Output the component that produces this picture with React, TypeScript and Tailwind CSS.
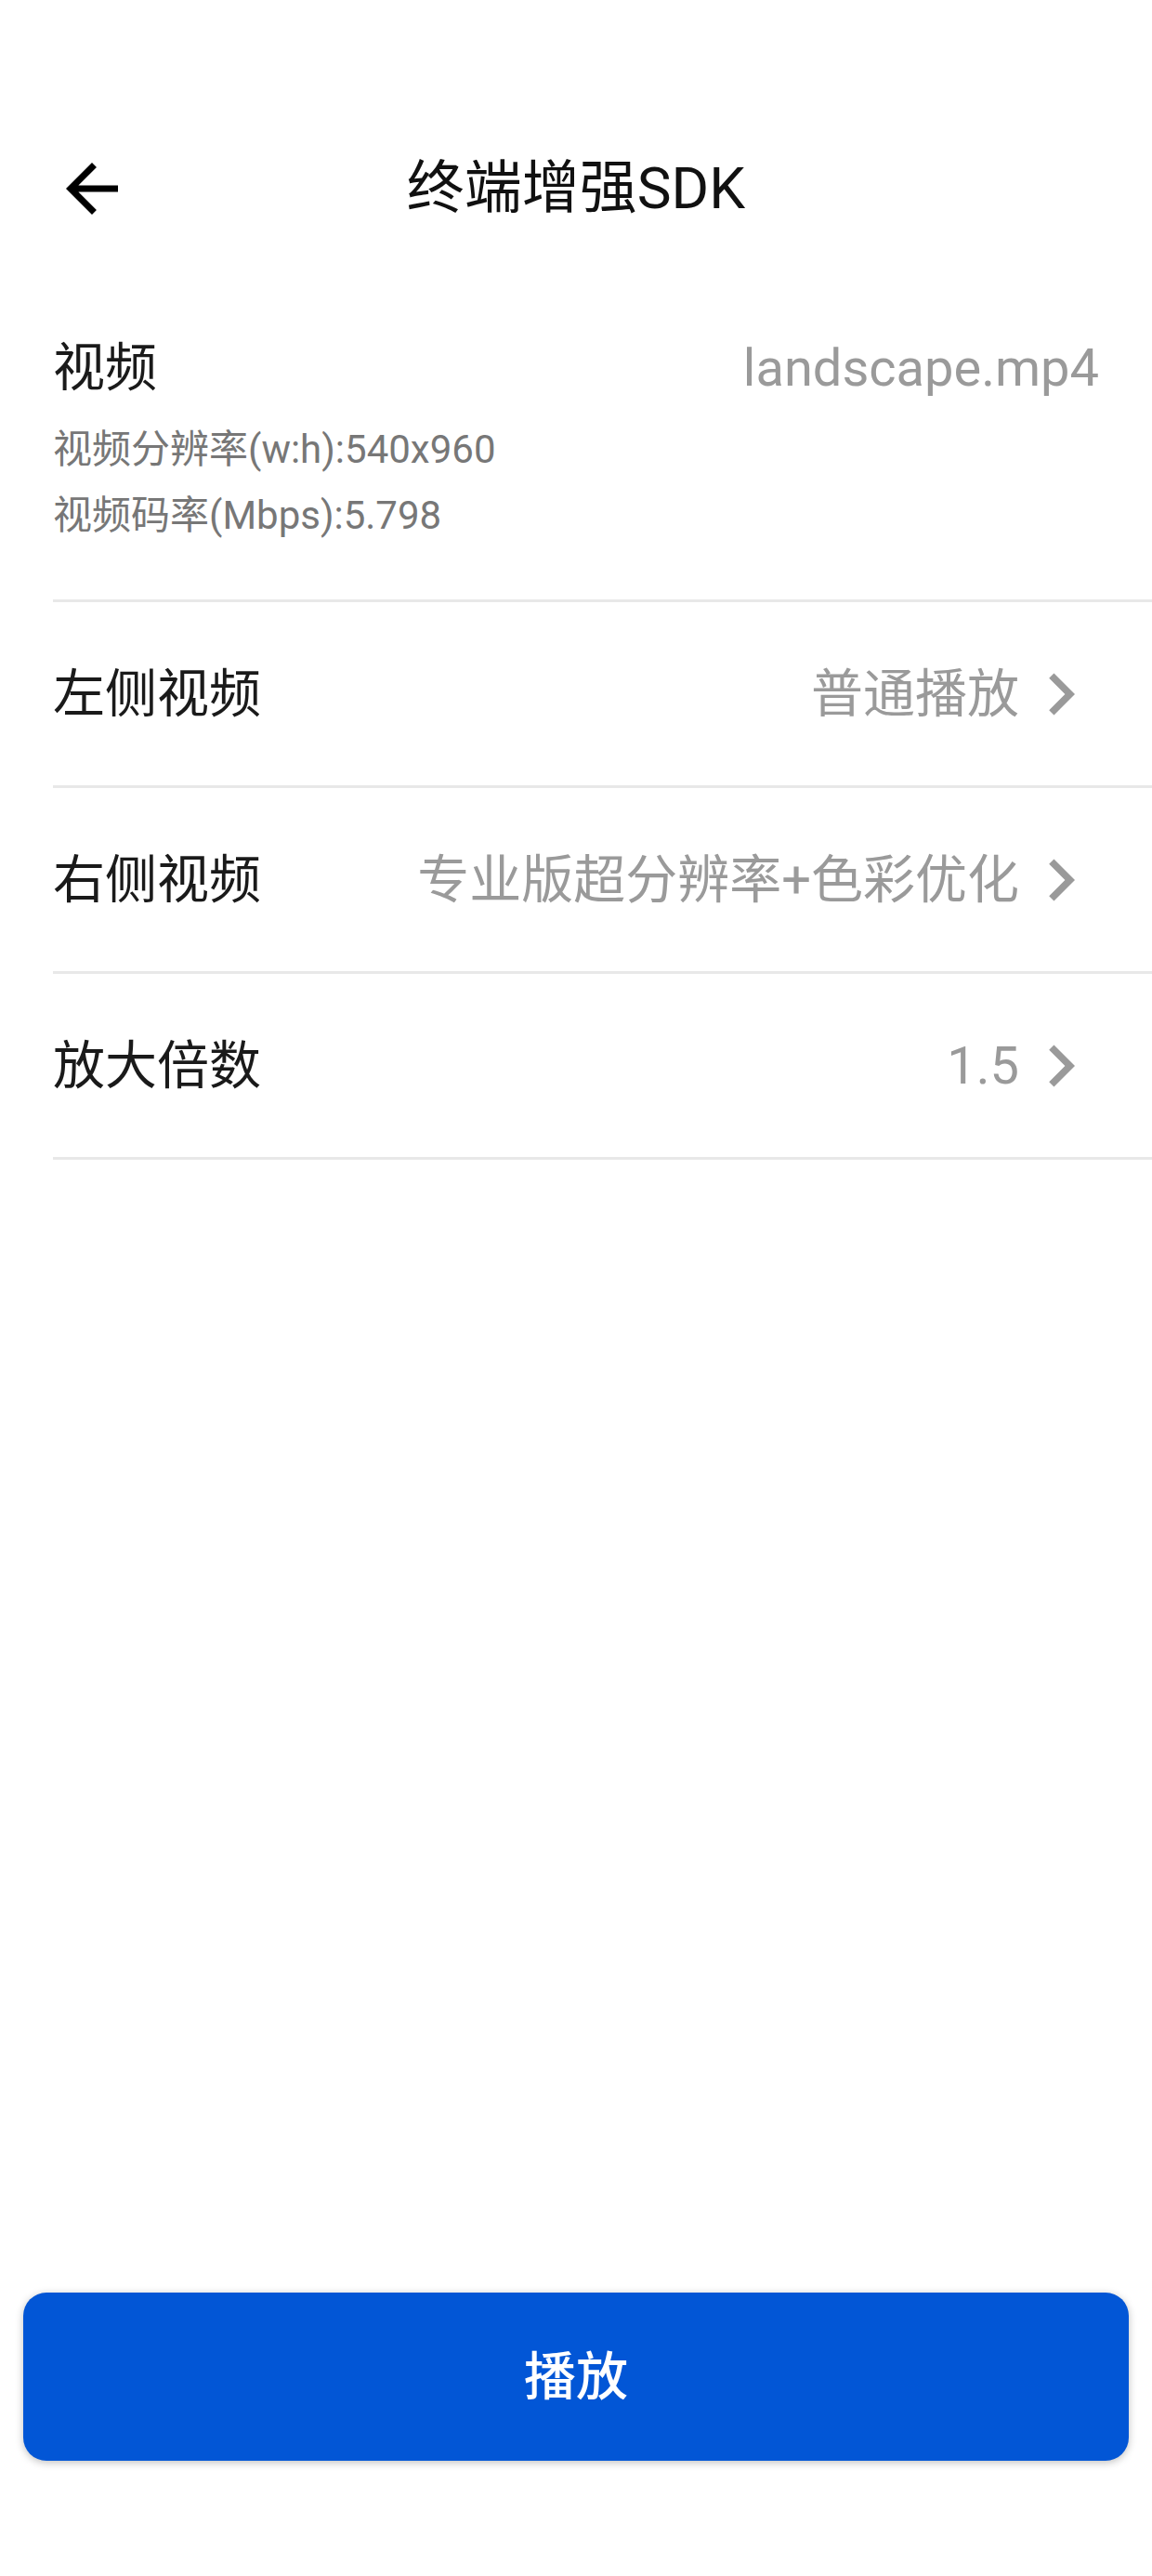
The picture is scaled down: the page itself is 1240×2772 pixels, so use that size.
import React from 'react';

interface SettingRow {
  label: string;
  value: string;
}

const rows: SettingRow[] = [
  { label: '左侧视频', value: '普通播放' },
  { label: '右侧视频', value: '专业版超分辨率+色彩优化' },
  { label: '放大倍数', value: '1.5' },
];

const fontStack = "font-['Roboto','Noto_Sans_CJK_SC',sans-serif]";

const ChevronRight = () => (
  <svg viewBox="0 0 24 24" className="w-[90px] h-[90px] shrink-0" fill="#9a9a9a">
    <path d="M10 6L8.59 7.41 13.17 12l-4.58 4.59L10 18l6-6z" />
  </svg>
);

const App: React.FC = () => {
  return (
    <div className={`${fontStack} min-h-[2772px] bg-white flex flex-col`}>
      {/* Status bar spacer */}
      <div className="h-[133px]" />

      {/* Toolbar */}
      <div className="relative h-[140px] flex items-center justify-center">
        <button className="absolute left-[57px] top-[28px] w-[84px] h-[84px]" aria-label="back">
          <svg viewBox="0 0 24 24" className="w-[84px] h-[84px]" fill="#000">
            <path d="M20 11H7.83l5.59-5.59L12 4l-8 8 8 8 1.41-1.41L7.83 13H20v-2z" />
          </svg>
        </button>
        <h1 className="text-[62px] leading-none text-[#111] font-normal">终端增强SDK</h1>
      </div>

      {/* Video info */}
      <div className="ml-[57px] pr-[57px] pt-[90px] pb-[55px] border-b-[3px] border-[#e8e8e8]">
        <div className="flex items-center justify-between text-[56px] leading-[67px]">
          <span className="text-[#1a1a1a]">视频</span>
          <span className="text-[#9a9a9a]">landscape.mp4</span>
        </div>
        <div className="mt-[18px] text-[42px] leading-[71px] text-[#777]">
          <p>视频分辨率(w:h):540x960</p>
          <p>视频码率(Mbps):5.798</p>
        </div>
      </div>

      {/* Setting rows */}
      {rows.map((row) => (
        <div
          key={row.label}
          className="ml-[57px] pr-[53px] h-[200px] flex items-center justify-between border-b-[3px] border-[#e8e8e8]"
        >
          <span className="text-[56px] text-[#1a1a1a]">{row.label}</span>
          <div className="flex items-center">
            <span className="text-[56px] text-[#9a9a9a]">{row.value}</span>
            <ChevronRight />
          </div>
        </div>
      ))}

      <div className="flex-1" />

      {/* Play button */}
      <div className="px-[25px] pb-[124px]">
        <button className="w-full h-[181px] rounded-[25px] bg-[#0256d6] text-white text-[56px] font-medium shadow-[0_2px_8px_rgba(0,0,0,0.25)]">
          播放
        </button>
      </div>
    </div>
  );
};

export default App;
